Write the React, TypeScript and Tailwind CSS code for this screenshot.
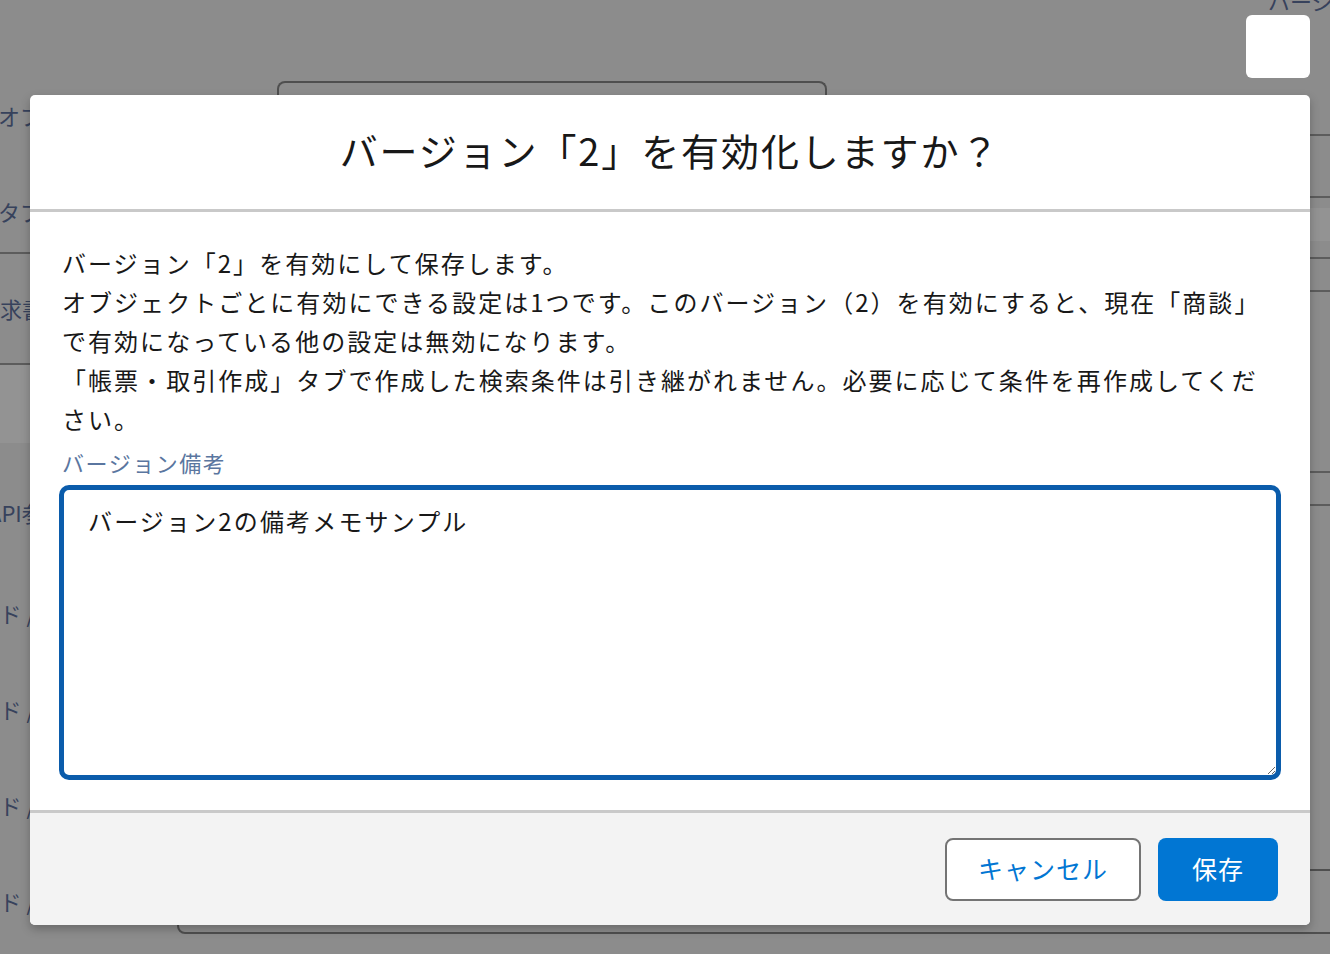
import React from "react";

const jp = { fontFamily: '"Noto Sans CJK JP", "Noto Sans", sans-serif' };

const fieldRows = ["フィールド / 1", "フィールド / 2", "フィールド / 3", "フィールド / 4"];

function BackgroundPage() {
  return (
    <div className="flex h-full text-[#37425c] text-[22px]" style={jp}>
      {/* left label column */}
      <div className="w-[177px] shrink-0 flex flex-col pt-[92px]">
        <div className="h-[46px] flex items-center whitespace-nowrap -ml-[2px]">オブジェクト</div>
        <div className="h-[116px] pt-[32px] flex items-center whitespace-nowrap border-b-2 border-[#5c5c5c] -ml-[2px]">
          タブ名
        </div>
        <div className="h-[111px] flex items-center whitespace-nowrap border-b-2 border-[#5c5c5c] -ml-[22px]">
          請求書
        </div>
        <div className="h-[78px] bg-[#939393]" />
        <div className="h-[122px] pt-[16px] flex items-center whitespace-nowrap -ml-[12px]">API参照名</div>
        {fieldRows.map((r) => (
          <div key={r} className="h-[96px] flex items-center whitespace-nowrap -ml-[88px]">
            {r}
          </div>
        ))}
      </div>

      {/* main area */}
      <div className="flex-1 flex flex-col">
        <div className="flex flex-1">
          <div className="flex-1 pl-[100px] pt-[81px]">
            <div className="w-[550px] h-[300px] border-2 border-b-0 border-[#4f4f4f] rounded-t-[8px]" />
          </div>
          <div className="w-[60px] shrink-0 flex flex-col">
            <div className="h-[136px] border-b-2 border-[#5c5c5c] relative">
              <span className="absolute -top-[16px] -left-[2px] whitespace-nowrap">バージョン</span>
              <span className="absolute top-[98px] left-[12px] whitespace-nowrap">ル</span>
            </div>
            <div className="h-[62px] border-b-2 border-[#5c5c5c]" />
            <div className="h-[10px]" />
            <div className="h-[33px] bg-[#939393]" />
            <div className="h-[18px] border-b-2 border-[#5c5c5c]" />
            <div className="h-[33px] border-b-2 border-[#5c5c5c]" />
            <div className="h-[181px] border-b-2 border-[#5c5c5c]" />
            <div className="h-[33px] border-b-2 border-[#5c5c5c]" />
          </div>
        </div>
        <div className="h-[65px] mb-[20px] -mr-[20px] border-2 border-[#4f4f4f] rounded-[8px]" />
      </div>
    </div>
  );
}

export default function App() {
  return (
    <div className="relative w-full h-[954px] overflow-hidden bg-[#8c8c8c]" style={jp}>
      <BackgroundPage />

      {/* close button */}
      <button className="absolute top-[15px] left-[1246px] w-[64px] h-[63px] bg-white rounded-[6px]" aria-label="閉じる" />

      {/* modal */}
      <div className="absolute top-[95px] left-[30px] w-[1280px] h-[830px] bg-white rounded-[5px] shadow-[0_4px_10px_rgba(0,0,0,0.25)] flex flex-col overflow-hidden">
        <header className="h-[117px] shrink-0 flex items-center justify-center pb-[6px] border-b-[3px] border-[#c9c9c9]">
          <h2 className="text-[38px] tracking-[0.05em] text-[#181818] font-normal">
            バージョン「2」を有効化しますか？
          </h2>
        </header>

        <div className="flex-1 flex flex-col pl-[29px] pr-[29px] pt-[31px] pb-[30px]">
          <div className="pl-[3px] text-[24px] leading-[39px] tracking-[0.085em] text-[#181818] whitespace-nowrap">
            <p>バージョン「2」を有効にして保存します。</p>
            <p>
              オブジェクトごとに有効にできる設定は1つです。このバージョン（2）を有効にすると、現在「商談」
              <br />
              で有効になっている他の設定は無効になります。
            </p>
            <p>
              「帳票・取引作成」タブで作成した検索条件は引き継がれません。必要に応じて条件を再作成してくだ
              <br />
              さい。
            </p>
          </div>
          <label className="pl-[3px] mt-[8px] text-[22px] leading-[32px] tracking-[0.07em] text-[#5a76a0]">
            バージョン備考
          </label>
          <textarea
            className="mt-[7px] flex-1 w-full border-[5px] border-[#0b5cab] rounded-[10px] px-[24px] pt-[11px] text-[24px] leading-[39px] tracking-[0.09em] text-[#181818] outline-none resize-y"
            style={jp}
            defaultValue="バージョン2の備考メモサンプル"
          />
        </div>

        <footer className="h-[115px] shrink-0 bg-[#f3f3f3] border-t-[3px] border-[#c9c9c9] flex items-center justify-end gap-[17px] pr-[32px]">
          <button className="w-[196px] h-[63px] bg-white border-2 border-[#747474] rounded-[8px] text-[25px] tracking-[0.04em] text-[#0176d3]">
            キャンセル
          </button>
          <button className="w-[120px] h-[63px] bg-[#0176d3] rounded-[8px] text-[25px] tracking-[0.04em] text-white">
            保存
          </button>
        </footer>
      </div>
    </div>
  );
}
